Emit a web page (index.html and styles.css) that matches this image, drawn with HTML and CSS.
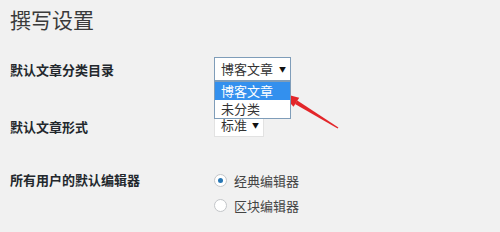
FILE: index.html
```html
<!DOCTYPE html>
<html lang="zh-CN">
<head>
    <meta charset="UTF-8">
    <title>撰写设置</title>
    <link rel="stylesheet" href="styles.css">
</head>
<body>
    <div class="wrap">
        <h1>撰写设置</h1>

        <div class="row row-category">
            <div class="label">默认文章分类目录</div>
            <div class="field">
                <div class="select select-open">博客文章<span class="caret">▼</span></div>
                <ul class="options">
                    <li class="selected">博客文章</li>
                    <li>未分类</li>
                </ul>
            </div>
        </div>

        <div class="row row-format">
            <div class="label">默认文章形式</div>
            <div class="field">
                <div class="select select-small">标准<span class="caret">▼</span></div>
            </div>
        </div>

        <div class="row row-editor">
            <div class="label">所有用户的默认编辑器</div>
            <div class="field">
                <label class="radio"><span class="dot checked"></span>经典编辑器</label>
                <label class="radio"><span class="dot"></span>区块编辑器</label>
            </div>
        </div>
    </div>

    <!-- red annotation arrow -->
    <svg class="pointer" width="500" height="232" viewBox="0 0 500 232">
        <polygon points="337.6,128.6 338.4,127.4 297.3,100.6 295.0,104.0" fill="#e3262a"/>
        <polygon points="281,93 299.2,97.8 293.5,106.8" fill="#e3262a"/>
    </svg>
</body>
</html>
```

FILE: styles.css
```css
body {
    margin: 0;
    background-color: #f1f1f1;
    font-family: "Noto Sans CJK SC", "Liberation Sans", sans-serif;
    color: #23282d;
    width: 500px;
    height: 232px;
    overflow: hidden;
    position: relative;
}

.wrap {
    padding: 0 10px;
}

h1 {
    margin: 0;
    padding-top: 6px;
    font-size: 21px;
    font-weight: normal;
    line-height: 26px;
    color: #3a3a3a;
}

.row {
    display: flex;
    align-items: flex-start;
}

.label {
    width: 204px;
    font-size: 13px;
    font-weight: bold;
    line-height: 18px;
}

.field {
    position: relative;
}

.row-category {
    margin-top: 25px;
}

.row-category .label {
    padding-top: 4px;
}

.row-format {
    margin-top: 32px;
}

.row-format .label {
    padding-top: 5px;
}

.row-editor {
    margin-top: 31px;
}

.row-editor .label {
    padding-top: 3px;
}

.select {
    box-sizing: border-box;
    width: 77px;
    height: 24px;
    padding: 0 4px 0 6px;
    background-color: #fff;
    border: 1px solid #ddd;
    font-size: 13px;
    line-height: 22px;
    color: #333;
    display: flex;
    justify-content: space-between;
}

.select-open {
    border-color: #7f9db9;
}

.select-small {
    width: 50px;
    border-color: #e2e2e2;
}

.caret {
    font-size: 7px;
    color: #111;
}

.options {
    position: absolute;
    top: 24px;
    left: 0;
    z-index: 2;
    box-sizing: border-box;
    width: 77px;
    margin: 0;
    padding: 0;
    list-style: none;
    background-color: #fff;
    border: 1px solid #7f9db9;
}

.options li {
    height: 18px;
    padding-left: 6px;
    font-size: 13px;
    line-height: 18px;
    color: #333;
}

.options li.selected {
    background-color: #3390ee;
    color: #fff;
}

.radio {
    display: flex;
    align-items: center;
    height: 25px;
    font-size: 13px;
    color: #444;
}

.dot {
    box-sizing: border-box;
    width: 13px;
    height: 13px;
    margin: 0 7px 0 0;
    border: 1px solid #c3c6c9;
    border-radius: 50%;
    background-color: #fff;
    display: flex;
    align-items: center;
    justify-content: center;
}

.dot.checked::after {
    content: "";
    width: 5px;
    height: 5px;
    border-radius: 50%;
    background-color: #2877b4;
}

.pointer {
    position: absolute;
    top: 0;
    left: 0;
    pointer-events: none;
}
```
